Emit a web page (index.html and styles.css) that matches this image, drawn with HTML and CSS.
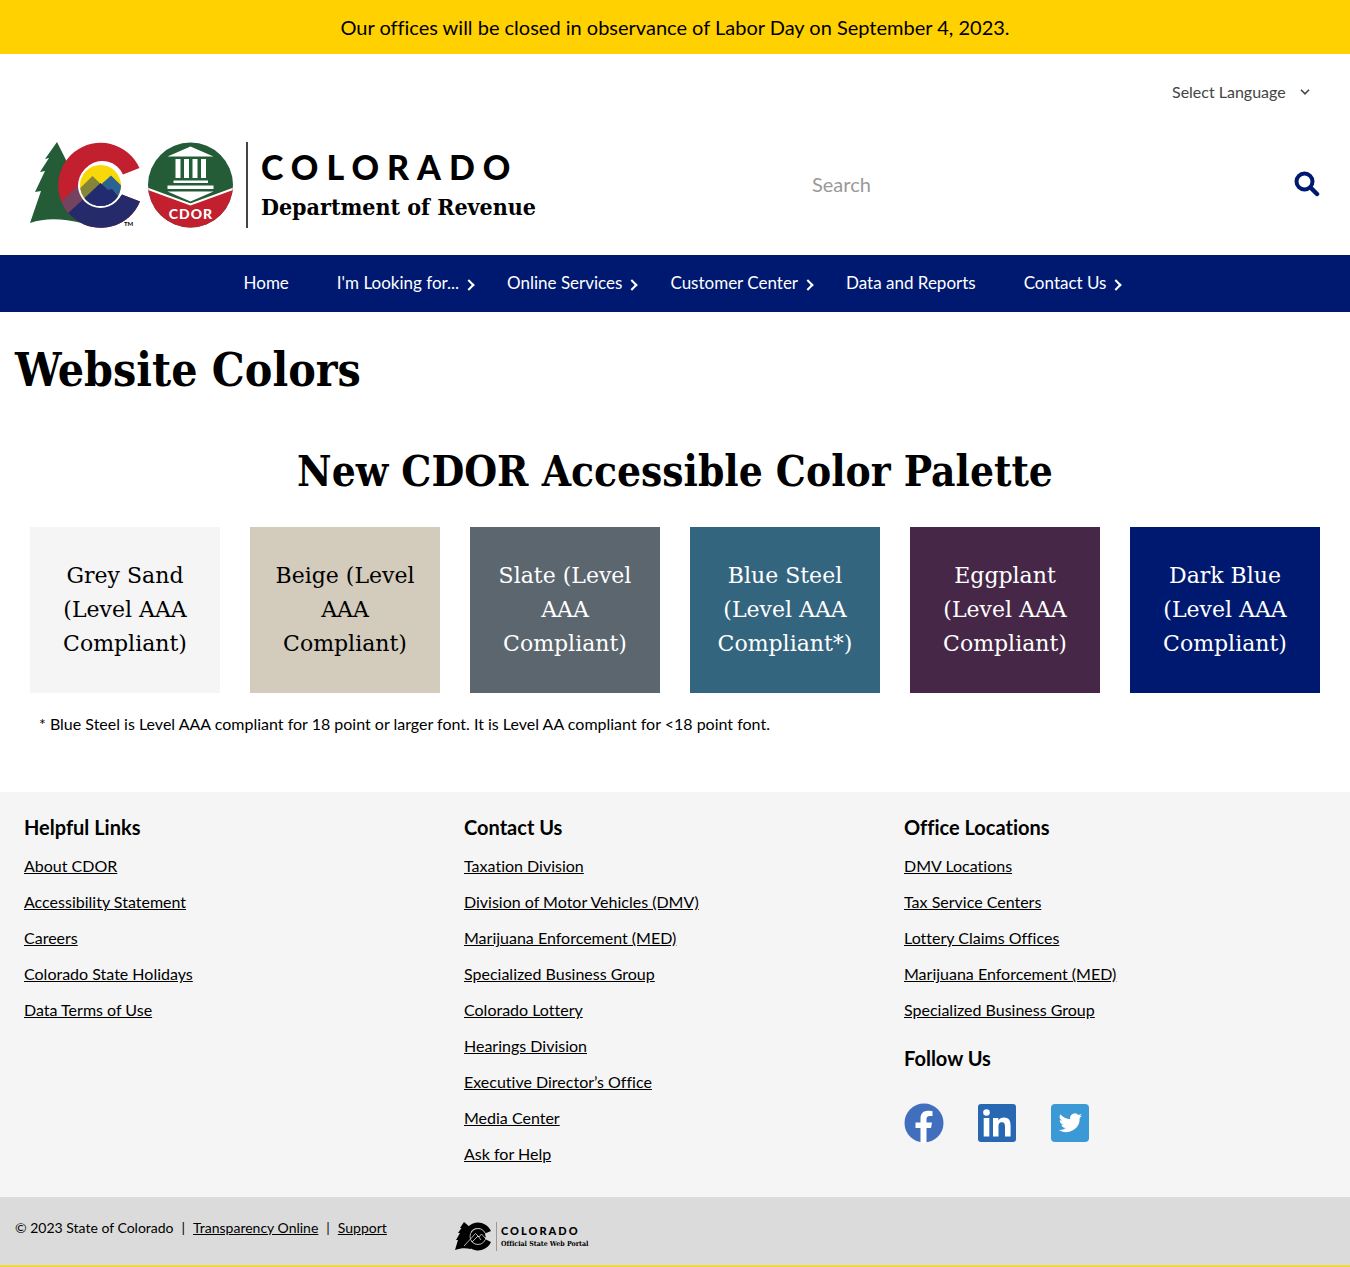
FILE: index.html
```html
<!DOCTYPE html>
<html lang="en">
<head>
<meta charset="utf-8">
<meta name="viewport" content="width=device-width, initial-scale=1">
<title>Website Colors | Department of Revenue</title>
<link rel="stylesheet" href="styles.css">
</head>
<body>
<div class="notice">Our offices will be closed in observance of Labor Day on September 4, 2023.</div>

<header class="header">
  <div class="language">
    <select class="language-select" aria-label="Select Language"><option>Select Language</option></select>
    <svg class="language-arrow" width="10" height="6" viewBox="0 0 10 6" aria-hidden="true"><path d="M1 .8l4 4 4-4" fill="none" stroke="#444" stroke-width="1.6"/></svg>
  </div>
  <div class="masthead">
    <a class="brand" href="#" aria-label="Colorado Department of Revenue">
      <svg class="brand-mark" width="204" height="86" viewBox="0 0 204 86" aria-hidden="true">
        <defs>
          <clipPath id="scene"><circle cx="70.500" cy="43.500" r="20.500"/></clipPath>
          <clipPath id="letter"><path d="M109.500 26A42.500 42.500 0 1 0 110 59.500L92 52.500A22.500 22.500 0 1 1 93 32.500Z"/></clipPath>
          <clipPath id="seal"><circle cx="160.500" cy="43" r="42.500"/></clipPath>
        </defs>
        <path d="M27 0L15 17l4-1L10 30l5-1L5 50l6-1L0 81c17-6 34-4 52 0L62 40 40 26Z" fill="#235c36"/>
        <g clip-path="url(#letter)">
          <path d="M20 0h95v86H20z" fill="#c3202f"/>
          <path d="M25 66L62 30 80 48 40 72Z" fill="#75425f"/>
          <path d="M36 73L70 42 92 50H115V86H36Z" fill="#252a6a"/>
        </g>
        <circle cx="70.500" cy="43.500" r="22.500" fill="#fff"/>
        <g clip-path="url(#scene)">
          <path d="M45 20h50v50H45z" fill="#f8d808"/>
          <path d="M42 54L62.500 34 76 47 60 68Z" fill="#858539"/>
          <path d="M66 47L81 33.500 97 49V68H66Z" fill="#2b6292"/>
          <path d="M44 66L70.500 41 78 48 82 47 87 53 94 56V70H44Z" fill="#222a70"/>
        </g>
        <text x="94" y="84" class="mark-tm">TM</text>
        <g clip-path="url(#seal)">
          <path d="M117 0h87v86H117z" fill="#235c36"/>
          <path d="M117 46L160.500 62 204 46V86H117Z" fill="#c3202f"/>
          <path d="M117 46.500L160.500 62.500 204 46.500" fill="none" stroke="#fff" stroke-width="2"/>
        </g>
        <path d="M137.500 14.500L160.500 4.500l23 10ZM145.500 17h5v19h-5ZM154 17h5v19h-5ZM162.500 17h5v19h-5ZM171 17h5v19h-5ZM143.500 38.500h34.500v2.500h-34.500ZM137.500 43.500h46v3.500h-46ZM137.500 49.500h46L160.500 59.500Z" fill="#fff"/>
        <text x="161" y="77" class="mark-cdor">CDOR</text>
      </svg>
      <span class="brand-text"><span class="brand-state">COLORADO</span><span class="brand-dept">Department of Revenue</span></span>
    </a>
    <form class="search">
      <input class="search-input" type="search" placeholder="Search" aria-label="Search">
      <button class="search-button" type="button" aria-label="Search"><svg width="26" height="26" viewBox="0 0 26 26" aria-hidden="true"><circle cx="10.500" cy="10.500" r="8" fill="none" stroke="#001970" stroke-width="4"/><path d="M16.500 16.500l6.500 6.500" stroke="#001970" stroke-width="4.500" stroke-linecap="round"/></svg></button>
    </form>
  </div>
</header>

<nav class="nav" aria-label="Main">
  <a class="nav-link" href="#">Home</a>
  <a class="nav-link nav-more" href="#">I'm Looking for...</a>
  <a class="nav-link nav-more" href="#">Online Services</a>
  <a class="nav-link nav-more" href="#">Customer Center</a>
  <a class="nav-link" href="#">Data and Reports</a>
  <a class="nav-link nav-more" href="#">Contact Us</a>
</nav>

<main class="main">
  <h1 class="page-title">Website Colors</h1>
  <h2 class="palette-title">New CDOR Accessible Color Palette</h2>
  <div class="palette">
    <div class="swatch sand">Grey Sand (Level AAA Compliant)</div>
    <div class="swatch beige">Beige (Level AAA Compliant)</div>
    <div class="swatch slate">Slate (Level AAA Compliant)</div>
    <div class="swatch steel">Blue Steel (Level AAA Compliant*)</div>
    <div class="swatch eggplant">Eggplant (Level AAA Compliant)</div>
    <div class="swatch navy">Dark Blue (Level AAA Compliant)</div>
  </div>
  <p class="note">* Blue Steel is Level AAA compliant for 18 point or larger font. It is Level AA compliant for &lt;18 point font.</p>
</main>

<footer>
  <div class="footer-columns">
    <section class="footer-column">
      <h3 class="footer-title">Helpful Links</h3>
      <ul class="footer-list">
        <li><a href="#">About CDOR</a></li>
        <li><a href="#">Accessibility Statement</a></li>
        <li><a href="#">Careers</a></li>
        <li><a href="#">Colorado State Holidays</a></li>
        <li><a href="#">Data Terms of Use</a></li>
      </ul>
    </section>
    <section class="footer-column">
      <h3 class="footer-title">Contact Us</h3>
      <ul class="footer-list">
        <li><a href="#">Taxation Division</a></li>
        <li><a href="#">Division of Motor Vehicles (DMV)</a></li>
        <li><a href="#">Marijuana Enforcement (MED)</a></li>
        <li><a href="#">Specialized Business Group</a></li>
        <li><a href="#">Colorado Lottery</a></li>
        <li><a href="#">Hearings Division</a></li>
        <li><a href="#">Executive Director’s Office</a></li>
        <li><a href="#">Media Center</a></li>
        <li><a href="#">Ask for Help</a></li>
      </ul>
    </section>
    <section class="footer-column">
      <h3 class="footer-title">Office Locations</h3>
      <ul class="footer-list">
        <li><a href="#">DMV Locations</a></li>
        <li><a href="#">Tax Service Centers</a></li>
        <li><a href="#">Lottery Claims Offices</a></li>
        <li><a href="#">Marijuana Enforcement (MED)</a></li>
        <li><a href="#">Specialized Business Group</a></li>
      </ul>
      <h3 class="footer-title follow-title">Follow Us</h3>
      <div class="social">
        <a href="#" aria-label="Facebook"><svg width="40" height="40" viewBox="0 0 40 40"><circle cx="20" cy="20" r="19.500" fill="#416fbd"/><path d="M16.500 40V25H11.500V19.500h5V15.500c0-5 3-7.700 7.500-7.700 1.700 0 3.500.3 4.500.5v4.700h-2.700c-2.500 0-3.300 1.400-3.300 3v3.500h5.500l-1 5.500H22.500V40Z" fill="#fff"/></svg></a>
        <a href="#" aria-label="LinkedIn"><svg width="40" height="40" viewBox="0 0 40 40"><rect x="1" y="1" width="38" height="38" rx="3" fill="#2867b2"/><circle cx="9.500" cy="9.500" r="3.300" fill="#fff"/><path d="M6.700 15h5.600v18.500H6.700ZM16 15h5.400v2.500c1-1.800 3-3 5.700-3 5.500 0 6.500 3.700 6.500 8.500v10.500H28V24.200c0-2.300 0-5-3.200-5s-3.300 2.500-3.300 5v9.300H16Z" fill="#fff"/></svg></a>
        <a href="#" aria-label="Twitter"><svg width="40" height="40" viewBox="0 0 40 40"><rect x="1" y="1" width="38" height="38" rx="4" fill="#3b9ad6"/><path d="M32 12.600a9.600 9.600 0 0 1-2.700.8 4.800 4.800 0 0 0 2.100-2.700 9.500 9.500 0 0 1-3 1.200 4.800 4.800 0 0 0-8.200 4.300 13.600 13.600 0 0 1-9.800-5 4.800 4.800 0 0 0 1.500 6.400 4.800 4.800 0 0 1-2.200-.6 4.800 4.800 0 0 0 3.800 4.700 4.800 4.800 0 0 1-2.100.1 4.800 4.800 0 0 0 4.400 3.300A9.600 9.600 0 0 1 8.800 27a13.600 13.600 0 0 0 20.900-12.100 9.700 9.700 0 0 0 2.300-2.300Z" fill="#fff"/></svg></a>
      </div>
    </section>
  </div>
  <div class="legal">
    <div class="legal-links"><span>© 2023 State of Colorado</span><span>|</span><a href="#">Transparency Online</a><span>|</span><a href="#">Support</a></div>
    <a class="portal" href="#" aria-label="Colorado Official State Web Portal">
      <svg width="36" height="29" viewBox="0 0 36 29" aria-hidden="true">
        <path d="M9 0L5 6h1.500L3 11h2L1 18h2L0 28c6-2 10-2 16-1V6Z"/>
        <path d="M36 9A14 14 0 1 0 36 20L30 17A8 8 0 1 1 30 11.500Z"/>
        <circle cx="23" cy="14.500" r="8" stroke="#ddd" stroke-width=".8"/>
        <path d="M9 24L20.500 11.500 24 15l2.500-3 4.500 5M17 20l6-6 3 4" fill="none" stroke="#ddd" stroke-width=".8"/>
      </svg>
      <span class="portal-text"><span class="portal-state">COLORADO</span><span class="portal-name">Official State Web Portal</span></span>
    </a>
  </div>
</footer>
</body>
</html>
```
FILE: styles.css
```css
* { box-sizing: border-box; }
body {
  margin: 0;
  background: #fff;
  color: #000;
  font-family: Lato, sans-serif;
  font-size: 16px;
  line-height: 24px;
  font-variant-ligatures: none;
}
a { color: inherit; }
svg { display: block; flex-shrink: 0; }

.notice {
  padding: 12px 16px;
  background: #ffd100;
  text-align: center;
  font-size: 20px;
  line-height: 30px;
}

.header { padding: 24px 30px 27px; }
.language {
  display: flex;
  align-items: center;
  justify-content: flex-end;
  gap: 14px;
  padding-right: 10px;
  height: 28px;
}
.language-select {
  appearance: none;
  border: 0;
  padding: 0;
  background: transparent;
  color: #444;
  font: inherit;
}
.masthead {
  display: flex;
  justify-content: space-between;
  align-items: center;
  margin-top: 36px;
}
.brand { display: flex; gap: 12px; text-decoration: none; }
.brand-text {
  display: flex;
  flex-direction: column;
  padding: 5px 0 0 13px;
  border-left: 2px solid #444;
}
.brand-state {
  font-size: 34px;
  line-height: 40px;
  font-weight: 900;
  letter-spacing: 8px;
}
.brand-dept {
  font-family: "DejaVu Serif Condensed", "DejaVu Serif", serif;
  font-size: 23px;
  line-height: 40px;
  font-weight: 700;
}
.mark-tm { font-size: 6px; font-weight: 700; }
.mark-cdor {
  fill: #fff;
  font-size: 14px;
  font-weight: 900;
  letter-spacing: 1px;
  text-anchor: middle;
}
.search {
  display: flex;
  align-items: center;
  width: 518px;
  padding-bottom: 3px;
}
.search-input {
  flex: 1;
  min-width: 0;
  border: 0;
  padding: 8px 10px;
  background: transparent;
  font: inherit;
  font-size: 20px;
  outline: 0;
}
.search-input::placeholder { color: #999; }
.search-button { border: 0; padding: 0; background: transparent; }

.nav {
  display: flex;
  justify-content: center;
  background: #001970;
  color: #fff;
  font-size: 17px;
}
.nav-link {
  position: relative;
  padding: 16px 24px 17px;
  text-decoration: none;
  white-space: nowrap;
}
.nav-more::after {
  content: "";
  position: absolute;
  top: 26px;
  right: 10px;
  width: 6px;
  height: 6px;
  border: solid #fff;
  border-width: 2px 2px 0 0;
  transform: rotate(45deg);
}

.page-title, .palette-title {
  margin: 0;
  font-family: "DejaVu Serif Condensed", "DejaVu Serif", serif;
  line-height: 60px;
}
.page-title {
  padding: 28px 15px;
  font-size: 46px;
}
.palette-title {
  padding: 14px 15px 25px;
  text-align: center;
  font-size: 42px;
}
.palette {
  display: grid;
  grid-template-columns: repeat(6, 1fr);
  gap: 30px;
  padding: 0 30px;
}
.swatch {
  padding: 32px 20px;
  text-align: center;
  font-family: "DejaVu Serif", serif;
  font-size: 22px;
  line-height: 34px;
  color: #fff;
}
.sand { background: #f5f5f5; color: #000; }
.beige { background: #d3cbbb; color: #000; }
.slate { background: #5c666f; }
.steel { background: #33657f; }
.eggplant { background: #472747; }
.navy { background: #001970; }
.note { margin: 0; padding: 19px 39px 56px; }

.footer-columns {
  display: grid;
  grid-template-columns: repeat(3, 1fr);
  padding: 20px 15px 25px;
  background: #f5f5f5;
}
.footer-column { padding: 0 9px; }
.footer-title { margin: 0; font-size: 20px; line-height: 30px; }
.footer-list {
  list-style: none;
  margin: 6px 0 0;
  padding: 0;
  line-height: 36px;
}
.follow-title { margin-top: 15px; }
.social { display: flex; gap: 33px; margin-top: 30px; }

.legal {
  display: grid;
  grid-template-columns: 1fr 2fr;
  padding: 19px 15px 14px;
  border-bottom: 2px solid #f0dc30;
  background: #dbdbdb;
  font-size: 14px;
}
.legal-links { display: flex; gap: 8px; }
.portal {
  display: flex;
  gap: 5px;
  padding-top: 6px;
  text-decoration: none;
}
.portal-text {
  display: flex;
  flex-direction: column;
  padding: 2px 0 0 4px;
  border-left: 1px solid #999;
}
.portal-state {
  font-size: 11px;
  line-height: 13px;
  font-weight: 900;
  letter-spacing: 2px;
}
.portal-name {
  font-family: "DejaVu Serif Condensed", "DejaVu Serif", serif;
  font-size: 7px;
  line-height: 13px;
  font-weight: 700;
}
```
